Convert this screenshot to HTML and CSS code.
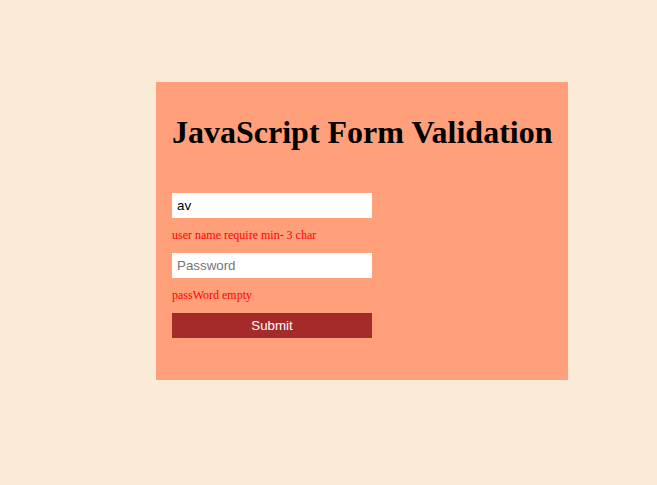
FILE: index.html
```html
<!DOCTYPE html>
<html>
<head>
<meta charset="utf-8">
<link rel="stylesheet" href="styles.css">
</head>
<body>
<div class="page">
  <div class="card">
    <h1 class="title"><span class="title-text">JavaScript Form Validation</span></h1>
    <form class="form">
      <input class="field" type="text" value="av">
      <div class="error">user name require min- 3 char</div>
      <input class="field" type="password" placeholder="Password">
      <div class="error">passWord empty</div>
      <button class="submit" type="button">Submit</button>
    </form>
  </div>
</div>
</body>
</html>
```
FILE: styles.css
```css
html, body {
  margin: 0;
  padding: 0;
  background: #faebd7;
  font-family: "Liberation Serif", serif;
}
.page {
  padding: 82px 0 0 156px;
}
.card {
  width: 412px;
  height: 298px;
  box-sizing: border-box;
  background: #ffa07a;
  padding: 32px 16px 0 16px;
}
.title {
  margin: 0;
  font-family: "Liberation Serif", serif;
  font-size: 32px;
  font-weight: bold;
  line-height: 37px;
  color: #000;
  white-space: nowrap;
}
.form {
  display: flex;
  flex-direction: column;
  align-items: flex-start;
  margin-top: 42px;
}
.field {
  width: 200px;
  height: 25px;
  box-sizing: border-box;
  border: none;
  outline: none;
  padding: 0 5px;
  margin: 0;
  background: #fff;
  font-family: "Liberation Sans", Arial, sans-serif;
  font-size: 13.333px;
  color: #000;
}
.field::placeholder {
  color: #757575;
}
.error {
  margin: 10px 0;
  height: 15px;
  line-height: 15px;
  font-size: 12px;
  color: #ff0000;
}
.submit {
  width: 200px;
  height: 25px;
  border: none;
  margin: 0;
  padding: 0;
  background: #a52a2a;
  color: #fff;
  font-family: "Liberation Sans", Arial, sans-serif;
  font-size: 13.333px;
}
```
